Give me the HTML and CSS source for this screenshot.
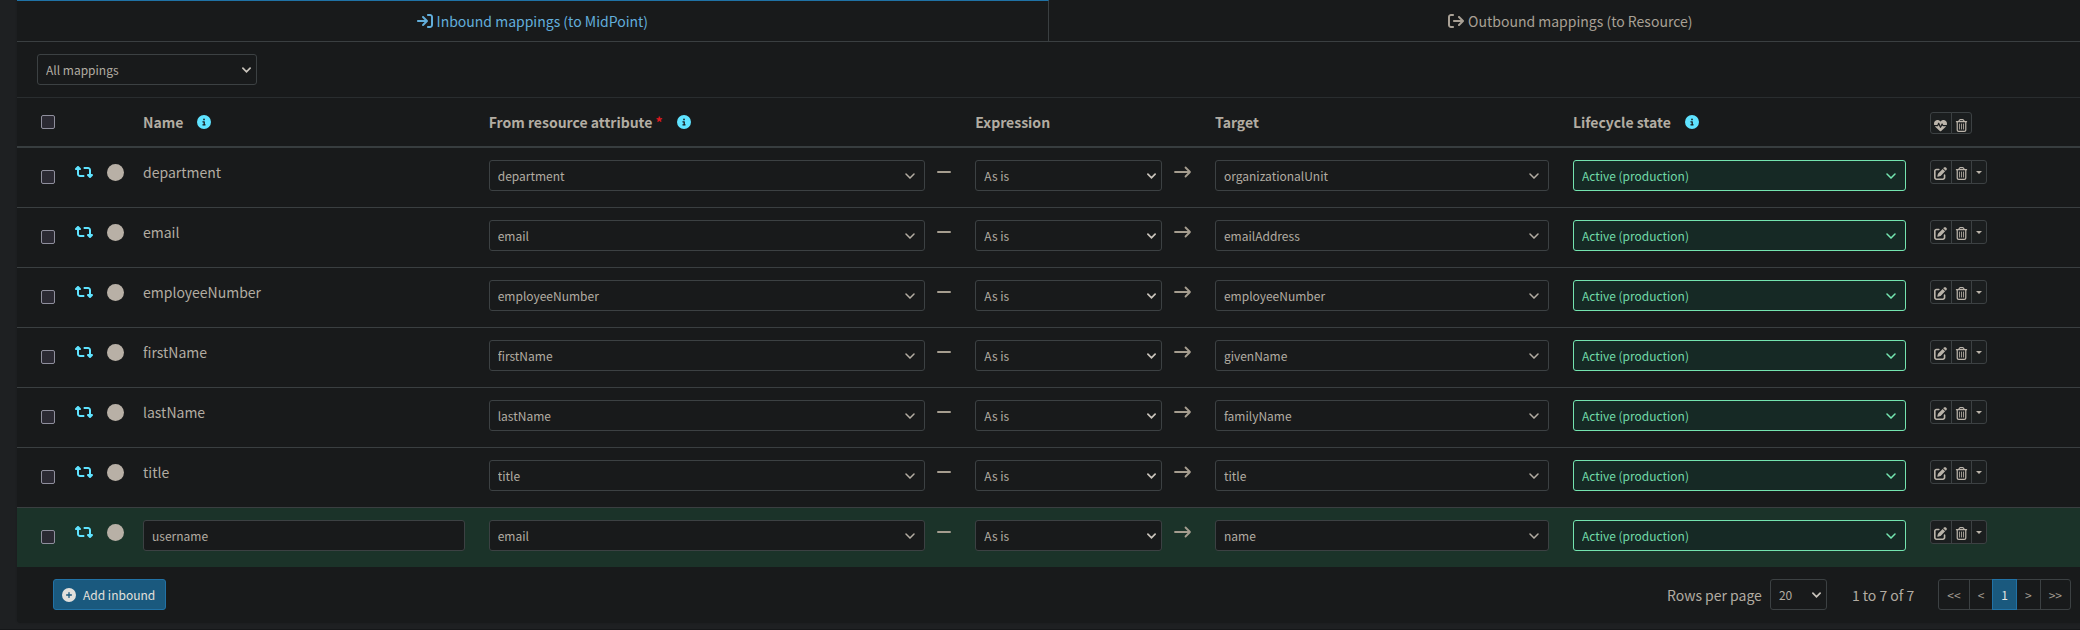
FILE: index.html
```html
<!DOCTYPE html>
<html lang="en">
<head>
<meta charset="utf-8">
<title>Inbound mappings</title>
<link rel="stylesheet" href="styles.css">
</head>
<body>
<svg class="sprite" aria-hidden="true">
<symbol id="in" viewBox="0 0 512 512"><path d="M352 96l64 0c17.7 0 32 14.3 32 32l0 256c0 17.7-14.3 32-32 32l-64 0c-17.7 0-32 14.3-32 32s14.3 32 32 32l64 0c53 0 96-43 96-96l0-256c0-53-43-96-96-96l-64 0c-17.7 0-32 14.3-32 32s14.3 32 32 32zm-9.4 182.6c12.5-12.5 12.5-32.8 0-45.3l-128-128c-12.5-12.5-32.8-12.5-45.3 0s-12.5 32.8 0 45.3L242.7 224 32 224c-17.7 0-32 14.3-32 32s14.3 32 32 32l210.7 0-73.4 73.4c-12.5 12.5-12.5 32.8 0 45.3s32.8 12.5 45.3 0l128-128z"/></symbol>
<symbol id="out" viewBox="0 0 512 512"><path d="M502.6 278.6c12.5-12.5 12.5-32.8 0-45.3l-128-128c-12.5-12.5-32.8-12.5-45.3 0s-12.5 32.8 0 45.3L402.7 224 192 224c-17.7 0-32 14.3-32 32s14.3 32 32 32l210.7 0-73.4 73.4c-12.5 12.5-12.5 32.8 0 45.3s32.8 12.5 45.3 0l128-128zM160 96c17.7 0 32-14.3 32-32s-14.3-32-32-32L96 32C43 32 0 75 0 128L0 384c0 53 43 96 96 96l64 0c17.7 0 32-14.3 32-32s-14.3-32-32-32l-64 0c-17.7 0-32-14.3-32-32l0-256c0-17.7 14.3-32 32-32l64 0z"/></symbol>
<symbol id="retweet" viewBox="0 0 576 512"><path d="M272 416c17.7 0 32-14.3 32-32s-14.3-32-32-32l-112 0c-17.7 0-32-14.3-32-32l0-128 32 0c12.9 0 24.6-7.8 29.6-19.8s2.2-25.7-6.9-34.9l-64-64c-12.5-12.5-32.8-12.5-45.3 0l-64 64c-9.2 9.2-11.9 22.9-6.9 34.9s16.6 19.8 29.6 19.8l32 0 0 128c0 53 43 96 96 96l112 0zM304 96c-17.7 0-32 14.3-32 32s14.3 32 32 32l112 0c17.7 0 32 14.3 32 32l0 128-32 0c-12.9 0-24.6 7.8-29.6 19.8s-2.2 25.7 6.9 34.9l64 64c12.5 12.5 32.8 12.5 45.3 0l64-64c9.2-9.2 11.9-22.9 6.9-34.9s-16.6-19.8-29.6-19.8l-32 0 0-128c0-53-43-96-96-96L304 96z"/></symbol>
<symbol id="info" viewBox="0 0 512 512"><path d="M256 512A256 256 0 1 0 256 0a256 256 0 1 0 0 512zM216 336l24 0 0-64-24 0c-13.3 0-24-10.7-24-24s10.7-24 24-24l48 0c13.3 0 24 10.7 24 24l0 88 8 0c13.3 0 24 10.7 24 24s-10.7 24-24 24l-80 0c-13.3 0-24-10.7-24-24s10.7-24 24-24zm40-208a32 32 0 1 1 0 64 32 32 0 1 1 0-64z"/></symbol>
<symbol id="plus" viewBox="0 0 512 512"><path d="M256 512A256 256 0 1 0 256 0a256 256 0 1 0 0 512zM232 344l0-64-64 0c-13.3 0-24-10.7-24-24s10.7-24 24-24l64 0 0-64c0-13.3 10.7-24 24-24s24 10.7 24 24l0 64 64 0c13.3 0 24 10.7 24 24s-10.7 24-24 24l-64 0 0 64c0 13.3-10.7 24-24 24s-24-10.7-24-24z"/></symbol>
<symbol id="heart" viewBox="0 0 512 512"><path d="M228.3 469.1L47.6 300.4c-4.2-3.9-8.2-8.1-11.9-12.4l87 0c22.6 0 43-13.6 51.7-34.5l10.5-25.2 49.3 109.5c3.8 8.5 12.1 14 21.4 14.1s17.8-5 22-13.3L320 253.7l1.7 3.4c9.5 19 28.9 31 50.1 31l104.5 0c-3.7 4.3-7.7 8.5-11.9 12.4L283.7 469.1c-7.5 7-17.4 10.9-27.7 10.9s-20.2-3.9-27.7-10.9zM503.7 240l-132 0c-3 0-5.8-1.7-7.2-4.4l-23.2-46.3c-4.1-8.1-12.4-13.3-21.5-13.3s-17.4 5.1-21.5 13.3l-41.4 82.8L205.9 158.2c-3.9-8.7-12.7-14.3-22.2-14.1s-18.1 5.9-21.8 14.8l-31.8 76.3c-1.2 3-4.2 4.9-7.4 4.9L16 240c-2.6 0-5 .4-7.3 1.1C3 225.2 0 208.2 0 190.9l0-5.8c0-69.9 50.5-129.5 119.4-141C165 36.5 211.4 51.4 244 84l12 12 12-12c32.6-32.6 79-47.5 124.6-39.9C461.5 55.6 512 115.2 512 185.1l0 5.8c0 16.9-2.8 33.5-8.3 49.1z"/></symbol>
<symbol id="trash" viewBox="0 0 448 512"><path d="M170.5 51.6L151.5 80l145 0-19-28.4c-1.5-2.2-4-3.6-6.7-3.6l-93.7 0c-2.7 0-5.2 1.3-6.7 3.6zm147-26.6L354.2 80 368 80l48 0 8 0c13.3 0 24 10.7 24 24s-10.7 24-24 24l-8 0 0 304c0 44.2-35.8 80-80 80l-224 0c-44.2 0-80-35.8-80-80l0-304-8 0c-13.3 0-24-10.7-24-24S10.7 80 24 80l8 0 48 0 13.8 0 36.7-55.1C140.9 9.4 158.4 0 177.1 0l93.7 0c18.7 0 36.2 9.4 46.6 24.9zM80 128l0 304c0 17.7 14.3 32 32 32l224 0c17.7 0 32-14.3 32-32l0-304L80 128zm80 64l0 208c0 8.8-7.2 16-16 16s-16-7.2-16-16l0-208c0-8.8 7.2-16 16-16s16 7.2 16 16zm80 0l0 208c0 8.8-7.2 16-16 16s-16-7.2-16-16l0-208c0-8.8 7.2-16 16-16s16 7.2 16 16zm80 0l0 208c0 8.8-7.2 16-16 16s-16-7.2-16-16l0-208c0-8.8 7.2-16 16-16s16 7.2 16 16z"/></symbol>
<symbol id="edit" viewBox="0 0 512 512"><path d="M471.6 21.7c-21.9-21.9-57.3-21.9-79.2 0L362.3 51.7l97.9 97.9 30.1-30.1c21.9-21.9 21.9-57.3 0-79.2L471.6 21.7zm-299.2 220c-6.1 6.1-10.8 13.6-13.5 21.9l-29.6 88.8c-2.9 8.6-.6 18.1 5.8 24.6s15.9 8.7 24.6 5.8l88.8-29.6c8.2-2.7 15.7-7.4 21.9-13.5L437.7 172.3 339.7 74.3 172.4 241.7zM96 64C43 64 0 107 0 160L0 416c0 53 43 96 96 96l256 0c53 0 96-43 96-96l0-96c0-17.7-14.3-32-32-32s-32 14.3-32 32l0 96c0 17.7-14.3 32-32 32L96 448c-17.7 0-32-14.3-32-32l0-256c0-17.7 14.3-32 32-32l96 0c17.7 0 32-14.3 32-32s-14.3-32-32-32L96 64z"/></symbol>
<symbol id="caret" viewBox="0 0 6 3"><path d="M0 0h6L3 3z"/></symbol>
<symbol id="minus" viewBox="0 0 14 16"><path d="M1 8h12" fill="none" stroke="currentColor" stroke-width="2" stroke-linecap="round"/></symbol>
<symbol id="arrow" viewBox="0 0 18 16"><path d="M1 8h15M11.500 3.500L16 8l-4.500 4.500" fill="none" stroke="currentColor" stroke-width="1.800" stroke-linecap="round" stroke-linejoin="round"/></symbol>
</svg>

<main class="card">
<nav class="tabs">
<a class="tab tab-active" href="#inbound"><svg class="icon-16"><use href="#in"/></svg><span>Inbound mappings (to MidPoint)</span></a>
<a class="tab" href="#outbound"><svg class="icon-16"><use href="#out"/></svg><span>Outbound mappings (to Resource)</span></a>
</nav>

<div class="toolbar">
<select class="control native filter" aria-label="Mapping filter"><option>All mappings</option></select>
</div>

<table class="mappings">
<colgroup><col class="col-check"><col class="col-kind"><col class="col-status"><col class="col-name"><col class="col-from"><col class="col-dash"><col class="col-expr"><col class="col-arrow"><col class="col-target"><col class="col-life"><col></colgroup>
<thead>
<tr>
<th class="check"><input type="checkbox" aria-label="Select all"></th>
<th></th>
<th></th>
<th><div class="heading">Name <svg class="info"><use href="#info"/></svg></div></th>
<th><div class="heading"><span>From resource attribute <span class="required">*</span></span> <svg class="info"><use href="#info"/></svg></div></th>
<th></th>
<th><div class="heading">Expression</div></th>
<th></th>
<th><div class="heading">Target</div></th>
<th><div class="heading">Lifecycle state <svg class="info"><use href="#info"/></svg></div></th>
<th><div class="actions"><button type="button" aria-label="Change lifecycle"><svg class="glyph"><use href="#heart"/></svg></button><button type="button" aria-label="Delete selected"><svg class="glyph"><use href="#trash"/></svg></button></div></th>
</tr>
</thead>
<tbody>
<tr>
<td class="check"><input type="checkbox" aria-label="Select department"></td>
<td><svg class="kind"><use href="#retweet"/></svg></td>
<td><span class="status"></span></td>
<td>department</td>
<td><select class="control" aria-label="Resource attribute"><option>department</option></select></td>
<td class="link"><svg class="dash"><use href="#minus"/></svg></td>
<td><select class="control native" aria-label="Expression"><option>As is</option></select></td>
<td class="link"><svg class="arrow"><use href="#arrow"/></svg></td>
<td><select class="control" aria-label="Target"><option>organizationalUnit</option></select></td>
<td><select class="control active-state" aria-label="Lifecycle state"><option>Active (production)</option></select></td>
<td><div class="actions"><button type="button" aria-label="Edit"><svg class="glyph"><use href="#edit"/></svg></button><button type="button" aria-label="Delete"><svg class="glyph"><use href="#trash"/></svg></button><button type="button" class="more" aria-label="More"><svg class="caret"><use href="#caret"/></svg></button></div></td>
</tr>
<tr>
<td class="check"><input type="checkbox" aria-label="Select email"></td>
<td><svg class="kind"><use href="#retweet"/></svg></td>
<td><span class="status"></span></td>
<td>email</td>
<td><select class="control" aria-label="Resource attribute"><option>email</option></select></td>
<td class="link"><svg class="dash"><use href="#minus"/></svg></td>
<td><select class="control native" aria-label="Expression"><option>As is</option></select></td>
<td class="link"><svg class="arrow"><use href="#arrow"/></svg></td>
<td><select class="control" aria-label="Target"><option>emailAddress</option></select></td>
<td><select class="control active-state" aria-label="Lifecycle state"><option>Active (production)</option></select></td>
<td><div class="actions"><button type="button" aria-label="Edit"><svg class="glyph"><use href="#edit"/></svg></button><button type="button" aria-label="Delete"><svg class="glyph"><use href="#trash"/></svg></button><button type="button" class="more" aria-label="More"><svg class="caret"><use href="#caret"/></svg></button></div></td>
</tr>
<tr>
<td class="check"><input type="checkbox" aria-label="Select employeeNumber"></td>
<td><svg class="kind"><use href="#retweet"/></svg></td>
<td><span class="status"></span></td>
<td>employeeNumber</td>
<td><select class="control" aria-label="Resource attribute"><option>employeeNumber</option></select></td>
<td class="link"><svg class="dash"><use href="#minus"/></svg></td>
<td><select class="control native" aria-label="Expression"><option>As is</option></select></td>
<td class="link"><svg class="arrow"><use href="#arrow"/></svg></td>
<td><select class="control" aria-label="Target"><option>employeeNumber</option></select></td>
<td><select class="control active-state" aria-label="Lifecycle state"><option>Active (production)</option></select></td>
<td><div class="actions"><button type="button" aria-label="Edit"><svg class="glyph"><use href="#edit"/></svg></button><button type="button" aria-label="Delete"><svg class="glyph"><use href="#trash"/></svg></button><button type="button" class="more" aria-label="More"><svg class="caret"><use href="#caret"/></svg></button></div></td>
</tr>
<tr>
<td class="check"><input type="checkbox" aria-label="Select firstName"></td>
<td><svg class="kind"><use href="#retweet"/></svg></td>
<td><span class="status"></span></td>
<td>firstName</td>
<td><select class="control" aria-label="Resource attribute"><option>firstName</option></select></td>
<td class="link"><svg class="dash"><use href="#minus"/></svg></td>
<td><select class="control native" aria-label="Expression"><option>As is</option></select></td>
<td class="link"><svg class="arrow"><use href="#arrow"/></svg></td>
<td><select class="control" aria-label="Target"><option>givenName</option></select></td>
<td><select class="control active-state" aria-label="Lifecycle state"><option>Active (production)</option></select></td>
<td><div class="actions"><button type="button" aria-label="Edit"><svg class="glyph"><use href="#edit"/></svg></button><button type="button" aria-label="Delete"><svg class="glyph"><use href="#trash"/></svg></button><button type="button" class="more" aria-label="More"><svg class="caret"><use href="#caret"/></svg></button></div></td>
</tr>
<tr>
<td class="check"><input type="checkbox" aria-label="Select lastName"></td>
<td><svg class="kind"><use href="#retweet"/></svg></td>
<td><span class="status"></span></td>
<td>lastName</td>
<td><select class="control" aria-label="Resource attribute"><option>lastName</option></select></td>
<td class="link"><svg class="dash"><use href="#minus"/></svg></td>
<td><select class="control native" aria-label="Expression"><option>As is</option></select></td>
<td class="link"><svg class="arrow"><use href="#arrow"/></svg></td>
<td><select class="control" aria-label="Target"><option>familyName</option></select></td>
<td><select class="control active-state" aria-label="Lifecycle state"><option>Active (production)</option></select></td>
<td><div class="actions"><button type="button" aria-label="Edit"><svg class="glyph"><use href="#edit"/></svg></button><button type="button" aria-label="Delete"><svg class="glyph"><use href="#trash"/></svg></button><button type="button" class="more" aria-label="More"><svg class="caret"><use href="#caret"/></svg></button></div></td>
</tr>
<tr>
<td class="check"><input type="checkbox" aria-label="Select title"></td>
<td><svg class="kind"><use href="#retweet"/></svg></td>
<td><span class="status"></span></td>
<td>title</td>
<td><select class="control" aria-label="Resource attribute"><option>title</option></select></td>
<td class="link"><svg class="dash"><use href="#minus"/></svg></td>
<td><select class="control native" aria-label="Expression"><option>As is</option></select></td>
<td class="link"><svg class="arrow"><use href="#arrow"/></svg></td>
<td><select class="control" aria-label="Target"><option>title</option></select></td>
<td><select class="control active-state" aria-label="Lifecycle state"><option>Active (production)</option></select></td>
<td><div class="actions"><button type="button" aria-label="Edit"><svg class="glyph"><use href="#edit"/></svg></button><button type="button" aria-label="Delete"><svg class="glyph"><use href="#trash"/></svg></button><button type="button" class="more" aria-label="More"><svg class="caret"><use href="#caret"/></svg></button></div></td>
</tr>
<tr class="added">
<td class="check"><input type="checkbox" aria-label="Select username"></td>
<td><svg class="kind"><use href="#retweet"/></svg></td>
<td><span class="status"></span></td>
<td><input class="control" type="text" value="username" aria-label="Name"></td>
<td><select class="control" aria-label="Resource attribute"><option>email</option></select></td>
<td class="link"><svg class="dash"><use href="#minus"/></svg></td>
<td><select class="control native" aria-label="Expression"><option>As is</option></select></td>
<td class="link"><svg class="arrow"><use href="#arrow"/></svg></td>
<td><select class="control" aria-label="Target"><option>name</option></select></td>
<td><select class="control active-state" aria-label="Lifecycle state"><option>Active (production)</option></select></td>
<td><div class="actions"><button type="button" aria-label="Edit"><svg class="glyph"><use href="#edit"/></svg></button><button type="button" aria-label="Delete"><svg class="glyph"><use href="#trash"/></svg></button><button type="button" class="more" aria-label="More"><svg class="caret"><use href="#caret"/></svg></button></div></td>
</tr>
</tbody>
</table>

<footer class="footer">
<button type="button" class="add"><svg><use href="#plus"/></svg>Add inbound</button>
<div class="paging">
<label for="page-size">Rows per page</label>
<select id="page-size" class="control native page-size"><option>20</option></select>
<span class="count">1 to 7 of 7</span>
<nav class="pages" aria-label="Pages"><a href="#first">&lt;&lt;</a><a href="#prev">&lt;</a><a class="current" href="#1">1</a><a href="#next">&gt;</a><a href="#last">&gt;&gt;</a></nav>
</div>
</footer>
</main>
<div class="page-end"></div>
</body>
</html>
```
FILE: styles.css
```css
* { box-sizing: border-box; }

body {
  margin: 0;
  overflow: hidden;
  background: #1e2022;
  color: #b2aca2;
  font: 14px/24px "Noto Sans CJK SC", "Noto Sans", sans-serif;
}

svg { display: block; flex: none; fill: currentColor; }
.sprite { position: absolute; width: 0; height: 0; }

/* The card runs past the right edge of the window. */
.card {
  margin: 0 -12px 0 17px;
  background: #181a1b;
  border-radius: 0 0 4px 4px;
  box-shadow: 0 0 2px rgba(0, 0, 0, 0.2);
}

/* Tabs */
.tabs { display: flex; border-bottom: 1px solid #3a3f41; }
.tab {
  display: flex;
  flex: 1 1 auto;
  align-items: center;
  justify-content: center;
  gap: 4px;
  height: 41px;
  border-top: 1px solid transparent;
  color: #a8a095;
  text-decoration: none;
}
.tab-active { border-top-color: #1f72a6; border-right: 1px solid #3a3f41; color: #62aedb; }
.icon-16 { width: 16px; height: 16px; }

.toolbar { padding: 12px 20px; }

/* Form controls */
.control {
  display: block;
  width: 100%;
  height: 31px;
  margin: 0;
  padding: 0 8px;
  border: 1px solid #3c4143;
  border-radius: 3px;
  outline: 0;
  background-color: #181a1b;
  color: #b2aca2;
  font: 12px/21px "Noto Sans CJK SC", "Noto Sans", sans-serif;
}
select.control {
  appearance: none;
  background-image: url("data:image/svg+xml,%3Csvg xmlns='http://www.w3.org/2000/svg' viewBox='0 0 10 6' fill='none' stroke='%23b2aca2' stroke-width='1.500' stroke-linecap='round'%3E%3Cpath d='M1 1l4 4 4-4'/%3E%3C/svg%3E");
  background-repeat: no-repeat;
  background-position: right 9px center;
  background-size: 10px 6px;
}
.control.filter { width: 220px; }
select.native {
  background-image: url("data:image/svg+xml,%3Csvg xmlns='http://www.w3.org/2000/svg' viewBox='0 0 10 6' fill='none' stroke='%23c8c3bb' stroke-width='1.900' stroke-linecap='round'%3E%3Cpath d='M1 1l4 4 4-4'/%3E%3C/svg%3E");
  background-position: right 5px center;
  background-size: 9px 6px;
}
select.active-state {
  border-color: #74e4b0;
  background-color: #162925;
  background-image: url("data:image/svg+xml,%3Csvg xmlns='http://www.w3.org/2000/svg' viewBox='0 0 10 6' fill='none' stroke='%2374e4b0' stroke-width='1.500' stroke-linecap='round'%3E%3Cpath d='M1 1l4 4 4-4'/%3E%3C/svg%3E");
  color: #70daa8;
}
input[type="checkbox"] {
  appearance: none;
  display: block;
  width: 14px;
  height: 14px;
  margin: 0;
  border: 1px solid #8f8f9d;
  border-radius: 2px;
  background: #2b2a33;
}

/* Mapping table */
.mappings {
  width: 100%;
  table-layout: fixed;
  border-spacing: 0;
  border-top: 1px solid #292d2f;
}
.col-check { width: 46px; }
.col-kind { width: 32px; }
.col-status { width: 36px; }
.col-name { width: 16.66%; }
.col-from { width: 22.2%; }
.col-dash { width: 26px; }
.col-expr { width: 10.15%; }
.col-arrow { width: 29px; }
.col-target { width: 17.25%; }
.col-life { width: 17.2%; }

th, td { padding: 12px; text-align: left; vertical-align: top; }
th { border-bottom: 2px solid #373d3f; }
td { height: 60px; border-bottom: 1px solid #3a3f41; }
td:nth-child(2), td:nth-child(3) { padding-right: 0; }
tr:last-child td { height: 59px; border-bottom: 0; }
.added { background: #1b3329; }
.check { padding-left: 24px; padding-right: 0; }
th.check { padding-top: 17px; }
td.check { padding-top: 22px; }
.link { padding-left: 0; padding-right: 0; color: #a59d8f; }

.heading { display: flex; align-items: center; gap: 14px; white-space: nowrap; }
.info { width: 14px; height: 14px; color: #5fe3ff; }
.required { color: #e0191f; }
.kind { width: 18px; height: 24px; color: #5fe3ff; }
.status {
  display: block;
  width: 17px;
  height: 17px;
  margin-top: 4px;
  border-radius: 50%;
  background: #b8b0a6;
}
.dash { width: 14px; height: 24px; }
.arrow { width: 18px; height: 24px; }

.actions { display: flex; }
.actions button {
  display: flex;
  align-items: center;
  justify-content: center;
  width: 21px;
  height: 24px;
  margin-right: -1px;
  padding: 2px 0 0;
  border: 1px solid #3c4143;
  background: #1b1e1f;
  color: #bbb4aa;
}
.actions .more { width: 16px; padding: 0; }
.actions button:first-child { width: 22px; border-radius: 3px 0 0 3px; }
.actions button:last-child { border-radius: 0 3px 3px 0; }
th .actions { padding-top: 2px; }
th .actions button { height: 22px; padding-top: 4px; }
.glyph { width: 13px; height: 13px; }
.caret { width: 6px; height: 3px; }

/* Footer */
.footer {
  display: flex;
  align-items: center;
  justify-content: space-between;
  padding: 12px 20px 13px 36px;
}
.add {
  display: flex;
  align-items: center;
  gap: 7px;
  height: 31px;
  padding: 0 10px 0 8px;
  border: 1px solid #2172a6;
  border-radius: 3px;
  background: #1a597e;
  color: #e2e0dc;
  font: 12px/21px "Noto Sans CJK SC", "Noto Sans", sans-serif;
}
.add svg { width: 14px; height: 14px; }
.paging { display: flex; align-items: center; padding-right: 1px; }
.control.page-size { width: 57px; margin: 0 25px 0 8px; }
.pages { display: flex; margin-left: 25px; }
.pages a {
  height: 31px;
  margin-left: -1px;
  padding: 0 8px;
  border: 1px solid #3c4143;
  color: #a39c91;
  font-size: 12px;
  line-height: 29px;
  text-decoration: none;
}
.pages a:first-child { border-radius: 3px 0 0 3px; }
.pages a:last-child { border-radius: 0 3px 3px 0; }
.pages .current { z-index: 1; border-color: #2172a6; background: #1a597e; color: #e8e6e3; }

.page-end { margin-top: 6px; border-bottom: 1px solid #151719; }
```
